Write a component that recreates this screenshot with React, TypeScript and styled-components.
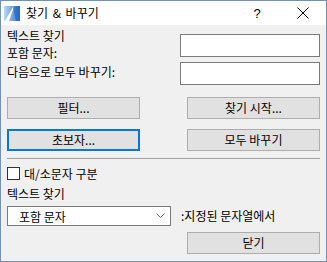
import React from "react";
import styled, { createGlobalStyle } from "styled-components";

const Global = createGlobalStyle`
  html, body { margin: 0; padding: 0; background: #ffffff; }
  * { box-sizing: border-box; }
`;

const FONT = `"Noto Sans CJK KR", "Noto Sans", sans-serif`;

const Window = styled.div`
  width: 327px;
  height: 262px;
  border: 1px solid #7391b5;
  background: #f0f0f0;
  display: flex;
  flex-direction: column;
  font-family: ${FONT};
  font-size: 12px;
  color: #000;
`;

const TitleBar = styled.div`
  height: 24px;
  background: #ffffff;
  display: flex;
  align-items: center;
  padding-left: 3px;
`;

const TitleText = styled.span`
  margin-left: 5px;
  font-size: 12px;
  line-height: 16px;
  word-spacing: 2px;
  flex: 1;
`;

const TitleButton = styled.div<{ $w: number }>`
  width: ${(p) => p.$w}px;
  height: 24px;
  display: flex;
  align-items: center;
  justify-content: center;
  font-family: "Liberation Sans", sans-serif;
  font-size: 13px;
`;

const Body = styled.div`
  flex: 1;
  padding: 3px 6px 0 6px;
  display: flex;
  flex-direction: column;
`;

const TopGrid = styled.div`
  display: grid;
  grid-template-columns: 1fr 140px;
`;

const LabelColumn = styled.div`
  display: flex;
  flex-direction: column;
`;

const Label = styled.div<{ $mt?: number }>`
  line-height: 16px;
  height: 16px;
  margin-top: ${(p) => p.$mt ?? 0}px;
  white-space: nowrap;
`;

const InputColumn = styled.div`
  display: flex;
  flex-direction: column;
  gap: 5px;
  padding-top: 6px;
`;

const TextBox = styled.div`
  height: 23px;
  background: #fff;
  border: 1px solid #7a7a7a;
`;

const ButtonGrid = styled.div<{ $mt: number }>`
  display: grid;
  grid-template-columns: 133px 133px;
  justify-content: space-between;
  row-gap: 10px;
  margin-top: ${(p) => p.$mt}px;
`;

const Button = styled.div<{ $focus?: boolean }>`
  height: 22px;
  background: #e1e1e1;
  border: ${(p) => (p.$focus ? "2px solid #0078d7" : "1px solid #adadad")};
  display: flex;
  align-items: center;
  justify-content: center;
  line-height: 16px;
  white-space: nowrap;
`;

const Separator = styled.div`
  height: 1px;
  background: #a0a0a0;
  margin-top: 7px;
`;

const CheckRow = styled.div`
  display: flex;
  align-items: center;
  gap: 4px;
  margin-top: 8px;
  height: 13px;
`;

const CheckBox = styled.div`
  width: 13px;
  height: 13px;
  background: #fff;
  border: 1px solid #333;
`;

const SelectRow = styled.div`
  display: flex;
  align-items: center;
  margin-top: 4px;
`;

const Select = styled.div`
  width: 164px;
  height: 20px;
  background: #fff;
  border: 1px solid #7a7a7a;
  display: flex;
  align-items: center;
  padding-left: 11px;
  padding-right: 5px;
  justify-content: space-between;
`;

const SelectSuffix = styled.span`
  margin-left: 10px;
  line-height: 16px;
`;

const CloseRow = styled.div`
  display: flex;
  justify-content: flex-end;
  margin-top: 6px;
`;

const CloseButton = styled(Button)`
  width: 133px;
`;

const AppIcon = () => (
  <svg width="17" height="15" viewBox="0 0 17 15">
    <defs>
      <linearGradient id="ig" x1="0" y1="0" x2="1" y2="0">
        <stop offset="0" stopColor="#bcd6f2" />
        <stop offset="1" stopColor="#2f72cf" />
      </linearGradient>
    </defs>
    <rect x="0" y="0" width="16" height="15" fill="url(#ig)" />
    <path d="M1 15 L9 1 L10 1 L5 15 Z" fill="#ffffff" />
    <path d="M9 1 L16 0 L16 15 L12 15 Z" fill="#1f62c4" opacity="0.6" />
  </svg>
);

const CloseIcon = () => (
  <svg width="12" height="12" viewBox="0 0 12 12">
    <path d="M0.5 0.5 L11.5 11.5 M11.5 0.5 L0.5 11.5" stroke="#000" strokeWidth="1" />
  </svg>
);

const Chevron = () => (
  <svg width="9" height="6" viewBox="0 0 9 6">
    <path d="M0.5 0.5 L4.5 4.5 L8.5 0.5" stroke="#606060" strokeWidth="1" fill="none" />
  </svg>
);

export default function App() {
  return (
    <>
      <Global />
      <Window>
        <TitleBar>
          <AppIcon />
          <TitleText>찾기 &amp; 바꾸기</TitleText>
          <TitleButton $w={46}>?</TitleButton>
          <TitleButton $w={46}>
            <CloseIcon />
          </TitleButton>
        </TitleBar>
        <Body>
          <TopGrid>
            <LabelColumn>
              <Label>텍스트 찾기</Label>
              <Label $mt={1}>포함 문자:</Label>
              <Label $mt={3}>다음으로 모두 바꾸기:</Label>
            </LabelColumn>
            <InputColumn>
              <TextBox />
              <TextBox />
            </InputColumn>
          </TopGrid>
          <ButtonGrid $mt={12}>
            <Button>필터...</Button>
            <Button>찾기 시작...</Button>
            <Button $focus>초보자...</Button>
            <Button>모두 바꾸기</Button>
          </ButtonGrid>
          <Separator />
          <CheckRow>
            <CheckBox />
            <span>대/소문자 구분</span>
          </CheckRow>
          <Label $mt={6}>텍스트 찾기</Label>
          <SelectRow>
            <Select>
              <span>포함 문자</span>
              <Chevron />
            </Select>
            <SelectSuffix>:지정된 문자열에서</SelectSuffix>
          </SelectRow>
          <CloseRow>
            <CloseButton>닫기</CloseButton>
          </CloseRow>
        </Body>
      </Window>
    </>
  );
}
